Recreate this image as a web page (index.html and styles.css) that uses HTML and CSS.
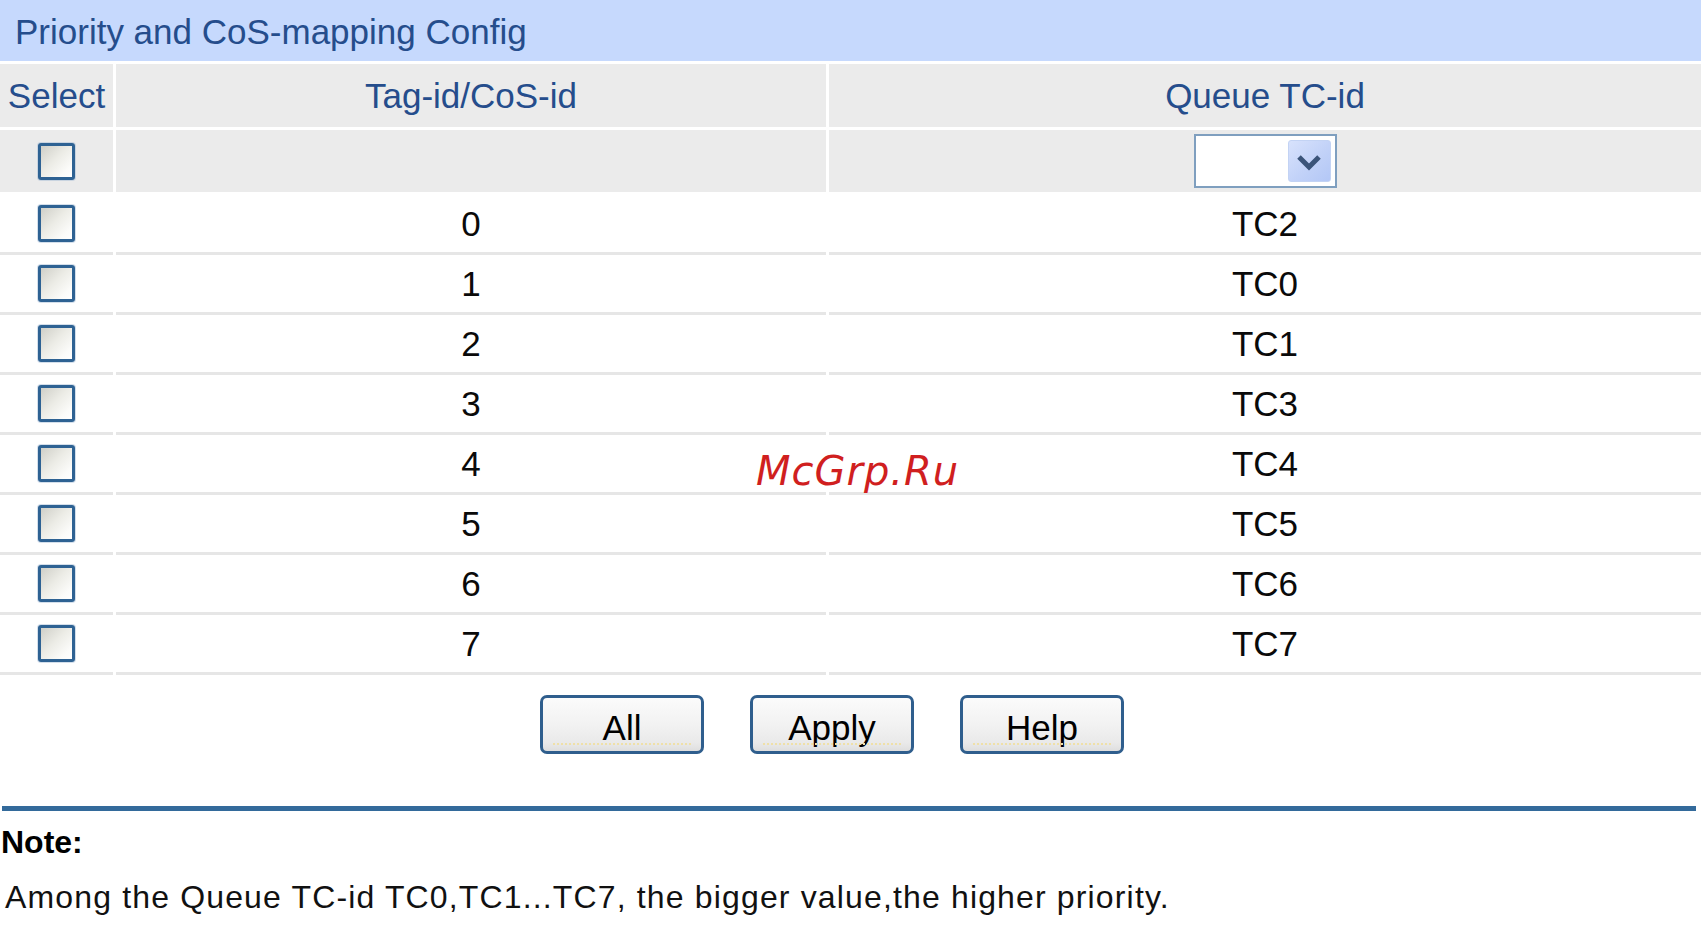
FILE: index.html
```html
<!DOCTYPE html>
<html lang="en">
<head>
<meta charset="utf-8">
<title>Priority and CoS-mapping Config</title>
<link rel="stylesheet" href="styles.css">
</head>
<body>
<div class="page">
  <div class="title">Priority and CoS-mapping Config</div>

  <div class="row head">
    <div class="cell">Select</div>
    <div class="cell">Tag-id/CoS-id</div>
    <div class="cell">Queue TC-id</div>
  </div>

  <div class="row filter">
    <div class="cell"><span class="cb"></span></div>
    <div class="cell"></div>
    <div class="cell">
      <div class="dropdown">
        <span class="arrow">
          <svg width="26" height="17" viewBox="0 0 26 17"><polyline points="3,3 13,13 23,3" fill="none" stroke="#3b5479" stroke-width="5"/></svg>
        </span>
      </div>
    </div>
  </div>

  <div class="body">
    <div class="row data"><div class="cell"><span class="cb"></span></div><div class="cell">0</div><div class="cell">TC2</div></div>
    <div class="row data"><div class="cell"><span class="cb"></span></div><div class="cell">1</div><div class="cell">TC0</div></div>
    <div class="row data"><div class="cell"><span class="cb"></span></div><div class="cell">2</div><div class="cell">TC1</div></div>
    <div class="row data"><div class="cell"><span class="cb"></span></div><div class="cell">3</div><div class="cell">TC3</div></div>
    <div class="row data"><div class="cell"><span class="cb"></span></div><div class="cell">4</div><div class="cell">TC4</div></div>
    <div class="row data"><div class="cell"><span class="cb"></span></div><div class="cell">5</div><div class="cell">TC5</div></div>
    <div class="row data"><div class="cell"><span class="cb"></span></div><div class="cell">6</div><div class="cell">TC6</div></div>
    <div class="row data"><div class="cell"><span class="cb"></span></div><div class="cell">7</div><div class="cell">TC7</div></div>
  </div>

  <div class="buttons">
    <button class="btn">All</button>
    <button class="btn">Apply</button>
    <button class="btn">Help</button>
  </div>

  <div class="rule"></div>

  <div class="note-title">Note:</div>
  <div class="note-text">Among the Queue TC-id TC0,TC1...TC7, the bigger value,the higher priority.</div>

  <div class="watermark">McGrp.Ru</div>
</div>
</body>
</html>
```

FILE: styles.css
```css
html, body {
  margin: 0;
  padding: 0;
  background: #ffffff;
}

body {
  font-family: "Liberation Sans", Arial, sans-serif;
  color: #000000;
}

.page {
  position: relative;
  width: 1701px;
}

.title {
  height: 61px;
  background: #c6d9fd;
  color: #254d8c;
  font-size: 35px;
  display: flex;
  align-items: center;
  padding-left: 15px;
  padding-top: 3px;
  box-sizing: border-box;
}

.row {
  display: grid;
  grid-template-columns: 113px 710px 1fr;
  column-gap: 3px;
}

.cell {
  display: flex;
  align-items: center;
  justify-content: center;
  font-size: 35px;
}

.head {
  margin-top: 3px;
  height: 63px;
}

.head .cell {
  background: #ebebeb;
  color: #254d8c;
}

.filter {
  margin-top: 3px;
  height: 62px;
}

.filter .cell {
  background: #ebebeb;
}

.body {
  margin-top: 3px;
}

.data {
  height: 60px;
}

.data .cell {
  box-sizing: border-box;
  border-bottom: 3px solid #e6e6e6;
  color: #0a0a0a;
}

.cb {
  display: block;
  width: 37px;
  height: 37px;
  box-sizing: border-box;
  border: 3px solid #2e6293;
  border-radius: 3px;
  background: linear-gradient(135deg, #cfcfc8 0%, #ececE6 45%, #fbfbf9 80%, #ffffff 100%);
  box-shadow: 0 0 0 1px rgba(160, 185, 210, 0.45);
}

.dropdown {
  width: 143px;
  height: 54px;
  box-sizing: border-box;
  border: 2px solid #7f9fbf;
  background: #ffffff;
  box-shadow: inset 0 0 0 1px #ffffff;
  display: flex;
  justify-content: flex-end;
  align-items: center;
  padding-right: 4px;
}

.arrow {
  width: 43px;
  height: 42px;
  box-sizing: border-box;
  border: 1px solid #c3d3f4;
  border-radius: 3px;
  background: linear-gradient(135deg, #d8e2fc 0%, #c2d2f8 55%, #b3c7f6 100%);
  display: flex;
  align-items: center;
  justify-content: center;
}

.arrow svg {
  display: block;
  margin-top: 2px;
}

.buttons {
  margin-top: 20px;
  height: 59px;
  display: flex;
  justify-content: center;
  gap: 46px;
  padding-right: 37px;
}

.btn {
  position: relative;
  width: 164px;
  height: 59px;
  box-sizing: border-box;
  border: 3px solid #2f5e8d;
  border-radius: 7px;
  background: linear-gradient(#fbfbfb 0%, #f2f2f2 50%, #e9e9e9 85%, #dedede 100%);
  font-family: "Liberation Sans", Arial, sans-serif;
  font-size: 35px;
  color: #000000;
  padding: 7px 0 0 0;
  margin: 0;
}

.btn::after {
  content: "";
  position: absolute;
  left: 10px;
  right: 10px;
  bottom: 6px;
  border-bottom: 2px dotted #efe0a8;
}

.rule {
  margin: 52px 5px 0 2px;
  height: 5px;
  background: #336a9b;
}

.note-title {
  margin-top: 11px;
  padding-left: 1px;
  font-size: 32px;
  line-height: 40px;
  font-weight: bold;
}

.note-text {
  margin-top: 15px;
  padding-left: 5px;
  font-size: 32px;
  line-height: 40px;
  letter-spacing: 1.15px;
  color: #111111;
}

.watermark {
  position: absolute;
  left: 756px;
  top: 451px;
  font-family: "DejaVu Sans", sans-serif;
  font-style: italic;
  font-size: 40px;
  line-height: 40px;
  letter-spacing: 1px;
  color: #d01f1f;
}
```
